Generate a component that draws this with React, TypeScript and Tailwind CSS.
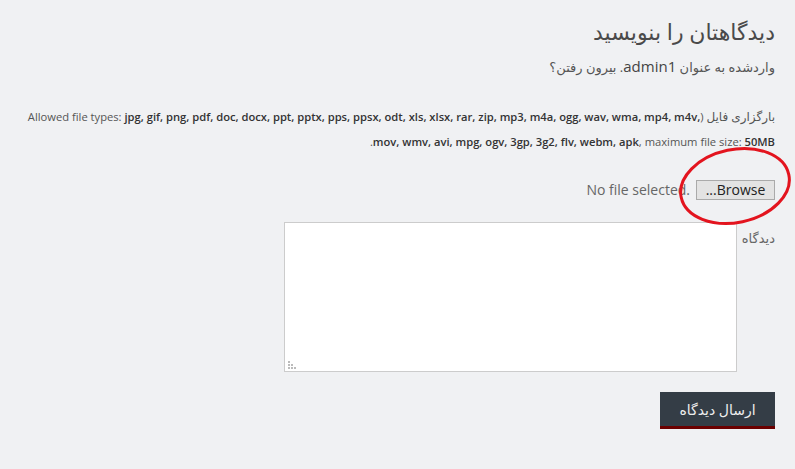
import React from "react";

const FONT = { fontFamily: '"Open Sans", "DejaVu Sans", sans-serif' };

export default function App() {
  return (
    <div
      dir="rtl"
      style={FONT}
      className="relative w-[795px] h-[469px] overflow-hidden bg-[#f0f1f3] text-[#555] pr-[20px] pl-[20px]"
    >
      {/* عنوان */}
      <h3 className="pt-[14px] text-[22px] leading-[34px] text-[#4a4a4a]">دیدگاهتان را بنویسید</h3>
      <p className="mt-[7px] text-[13px] leading-[22px] text-[#555]">
        واردشده به عنوان <span className="text-[15px] text-[#444]">admin1</span>. بیرون رفتن؟
      </p>

      {/* انواع فایل */}
      <p className="mt-[26px] text-[11.2px] leading-[25px] text-[#555]">
        <span className="text-[12px]">بارگزاری فایل</span> (Allowed file types:{" "}
        <b className="font-semibold text-[#333]">
          jpg, gif, png, pdf, doc, docx, ppt, pptx, pps, ppsx, odt, xls, xlsx, rar, zip, mp3, m4a, ogg, wav, wma, mp4,
          m4v, mov, wmv, avi, mpg, ogv, 3gp, 3g2, flv, webm, apk
        </b>
        , maximum file size: <b className="font-semibold text-[#333]">50MB</b>.
      </p>

      {/* انتخاب فایل */}
      <div dir="ltr" className="mt-[25px] flex items-center justify-end gap-[6px]">
        <span className="text-[14px] text-[#666]">No file selected.</span>
        <button className="h-[20px] w-[79px] border border-[#aaa] bg-[#e3e3e3] text-[14px] leading-[18px] text-[#222]">
          ...Browse
        </button>
      </div>

      {/* دیدگاه */}
      <div className="mt-[22px] flex items-start gap-[5px]">
        <label className="pt-[7px] text-[13px] text-[#666]">دیدگاه</label>
        <div className="relative">
          <textarea
            dir="rtl"
            className="block h-[150px] w-[453px] resize-none border border-[#ccc] bg-white outline-none"
          />
          <svg className="pointer-events-none absolute bottom-[3px] left-[3px]" width="9" height="9" viewBox="0 0 9 9">
            <g fill="#bbb">
              <rect x="1" y="1" width="2" height="2" />
              <rect x="1" y="4" width="2" height="2" />
              <rect x="4" y="4" width="2" height="2" />
              <rect x="1" y="7" width="2" height="2" />
              <rect x="4" y="7" width="2" height="2" />
              <rect x="7" y="7" width="2" height="2" />
            </g>
          </svg>
        </div>
      </div>

      <div className="mt-[20px] flex">
        <button className="h-[37px] w-[115px] border-b-[3px] border-[#6b0000] bg-[#343d46] text-[14px] text-[#eee]">
          ارسال دیدگاه
        </button>
      </div>

      {/* دایره قرمز */}
      <svg className="pointer-events-none absolute left-[670px] top-[140px]" width="125" height="95" viewBox="0 0 125 95">
        <ellipse
          cx="65"
          cy="46"
          rx="55"
          ry="36.5"
          transform="rotate(-12 65 46)"
          fill="none"
          stroke="#e3141e"
          strokeWidth="3"
        />
      </svg>
    </div>
  );
}
